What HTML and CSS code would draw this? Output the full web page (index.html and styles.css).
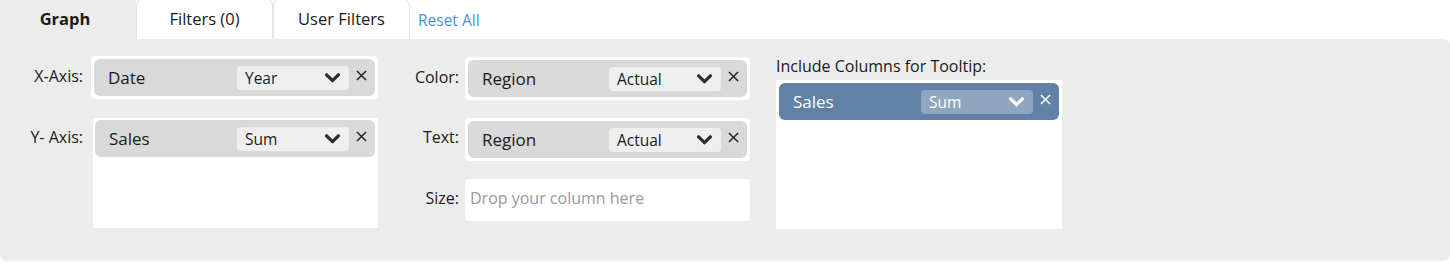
FILE: index.html
```html
<!DOCTYPE html>
<html lang="en">
<head>
  <meta charset="UTF-8">
  <title>Chart Builder</title>
  <link rel="stylesheet" href="styles.css">
</head>
<body>
  <!-- Tabs -->
  <div class="tabs">
    <div class="tab tab-active">Graph</div>
    <div class="tab">Filters (0)</div>
    <div class="tab">User Filters</div>
    <a href="#" class="reset-link">Reset All</a>
  </div>

  <!-- Graph settings panel -->
  <div class="panel">
    <div class="axis-col">
      <div class="field-label label-first">X-Axis:</div>
      <div class="drop-zone">
        <div class="pill">
          <span class="pill-name">Date</span>
          <div class="pill-select">
            <span>Year</span>
            <svg class="chevron" viewBox="0 0 14 9"><polyline points="1.5,1.5 7,7 12.5,1.5" /></svg>
          </div>
          <svg class="remove" viewBox="0 0 12 12"><path d="M1 1L11 11M11 1L1 11" /></svg>
        </div>
      </div>

      <div class="field-label">Y- Axis:</div>
      <div class="drop-zone drop-tall">
        <div class="pill">
          <span class="pill-name">Sales</span>
          <div class="pill-select">
            <span>Sum</span>
            <svg class="chevron" viewBox="0 0 14 9"><polyline points="1.5,1.5 7,7 12.5,1.5" /></svg>
          </div>
          <svg class="remove" viewBox="0 0 12 12"><path d="M1 1L11 11M11 1L1 11" /></svg>
        </div>
      </div>
    </div>

    <div class="mark-col">
      <div class="field-label label-first">Color:</div>
      <div class="drop-zone">
        <div class="pill">
          <span class="pill-name">Region</span>
          <div class="pill-select">
            <span>Actual</span>
            <svg class="chevron" viewBox="0 0 14 9"><polyline points="1.5,1.5 7,7 12.5,1.5" /></svg>
          </div>
          <svg class="remove" viewBox="0 0 12 12"><path d="M1 1L11 11M11 1L1 11" /></svg>
        </div>
      </div>

      <div class="field-label">Text:</div>
      <div class="drop-zone">
        <div class="pill">
          <span class="pill-name">Region</span>
          <div class="pill-select">
            <span>Actual</span>
            <svg class="chevron" viewBox="0 0 14 9"><polyline points="1.5,1.5 7,7 12.5,1.5" /></svg>
          </div>
          <svg class="remove" viewBox="0 0 12 12"><path d="M1 1L11 11M11 1L1 11" /></svg>
        </div>
      </div>

      <div class="field-label">Size:</div>
      <div class="drop-zone drop-empty">Drop your column here</div>
    </div>

    <div class="tooltip-col">
      <div class="tooltip-label">Include Columns for Tooltip:</div>
      <div class="drop-zone drop-tooltip">
        <div class="pill pill-blue">
          <span class="pill-name">Sales</span>
          <div class="pill-select">
            <span>Sum</span>
            <svg class="chevron" viewBox="0 0 14 9"><polyline points="1.5,1.5 7,7 12.5,1.5" /></svg>
          </div>
          <svg class="remove" viewBox="0 0 12 12"><path d="M1 1L11 11M11 1L1 11" /></svg>
        </div>
      </div>
    </div>
  </div>
</body>
</html>
```

FILE: styles.css
```css
body {
  margin: 0;
  padding: 0;
  background: #fff;
  font-family: 'Open Sans', 'Liberation Sans', sans-serif;
  color: #1a1a1a;
  height: 264px;
  overflow: hidden;
}

/* Tabs */
.tabs {
  display: flex;
  align-items: flex-end;
  height: 40px;
  margin-top: -1px;
}

.tab {
  box-sizing: border-box;
  width: 137px;
  height: 41px;
  display: flex;
  align-items: center;
  justify-content: center;
  padding-bottom: 1px;
  font-size: 16.5px;
  background: #fff;
  border: 1px solid #e3e3e3;
  border-bottom: none;
  border-radius: 8px 8px 0 0;
}

.tab-active {
  width: 136px;
  font-weight: 700;
  background: #ececec;
  border: none;
  border-radius: 0;
  padding-right: 6px;
}

.reset-link {
  align-self: center;
  margin-left: 8px;
  margin-top: 2px;
  font-size: 15.5px;
  color: #4a90e2;
  text-decoration: none;
}

/* Panel */
.panel {
  display: flex;
  align-items: flex-start;
  height: 220px;
  box-sizing: border-box;
  padding-top: 17px;
  background: #ececec;
  border-radius: 0 6px 6px 6px;
  box-shadow: 0 2px 2px rgba(0, 0, 0, 0.08);
}

.axis-col {
  display: grid;
  grid-template-columns: 83px 287px;
  column-gap: 8px;
  row-gap: 19px;
}

.mark-col {
  display: grid;
  grid-template-columns: 75px 285px;
  column-gap: 6px;
  row-gap: 18px;
  margin-left: 6px;
  margin-top: 1px;
}

.tooltip-col {
  margin-left: 26px;
}

.field-label {
  text-align: right;
  font-size: 16px;
  line-height: 20px;
  padding-top: 9px;
}

.label-first {
  padding-top: 10px;
}

.tooltip-label {
  font-size: 16px;
  line-height: 20px;
  margin-bottom: 4px;
}

/* Drop zones */
.drop-zone {
  box-sizing: border-box;
  background: #fff;
  border-radius: 4px;
  padding: 3px;
  height: 43px;
}

.drop-tall {
  height: 110px;
  border-radius: 0;
  padding: 2px 3px 2px 2px;
  margin-left: 2px;
}

.drop-empty {
  padding: 9px 5px;
  font-size: 16px;
  line-height: 20px;
  color: #9a9a9a;
  height: 42px;
}

.drop-tooltip {
  width: 286px;
  height: 149px;
  border-radius: 0;
}

/* Pills */
.pill {
  display: flex;
  align-items: center;
  height: 37px;
  box-sizing: border-box;
  padding: 0 8px 0 14px;
  background: #d9d9d9;
  border-radius: 6px;
  color: #1a1a1a;
}

.pill-name {
  flex: 1;
  font-size: 17px;
}

.pill-select {
  display: flex;
  align-items: center;
  justify-content: space-between;
  box-sizing: border-box;
  width: 112px;
  height: 24px;
  padding: 0 9px 0 8px;
  background: #efefef;
  border-radius: 4px;
  font-size: 15.5px;
}

.chevron {
  width: 15px;
  height: 10px;
  fill: none;
  stroke: #2d2d2d;
  stroke-width: 3;
  stroke-linecap: round;
  stroke-linejoin: round;
}

.remove {
  width: 11px;
  height: 11px;
  margin-left: 7px;
  margin-top: -5px;
  fill: none;
  stroke: #222;
  stroke-width: 1.6;
}

.pill-blue {
  background: #6181a7;
  color: #fff;
}

.pill-blue .pill-select {
  background: #8fa6bf;
}

.pill-blue .chevron,
.pill-blue .remove {
  stroke: #fff;
}
```
